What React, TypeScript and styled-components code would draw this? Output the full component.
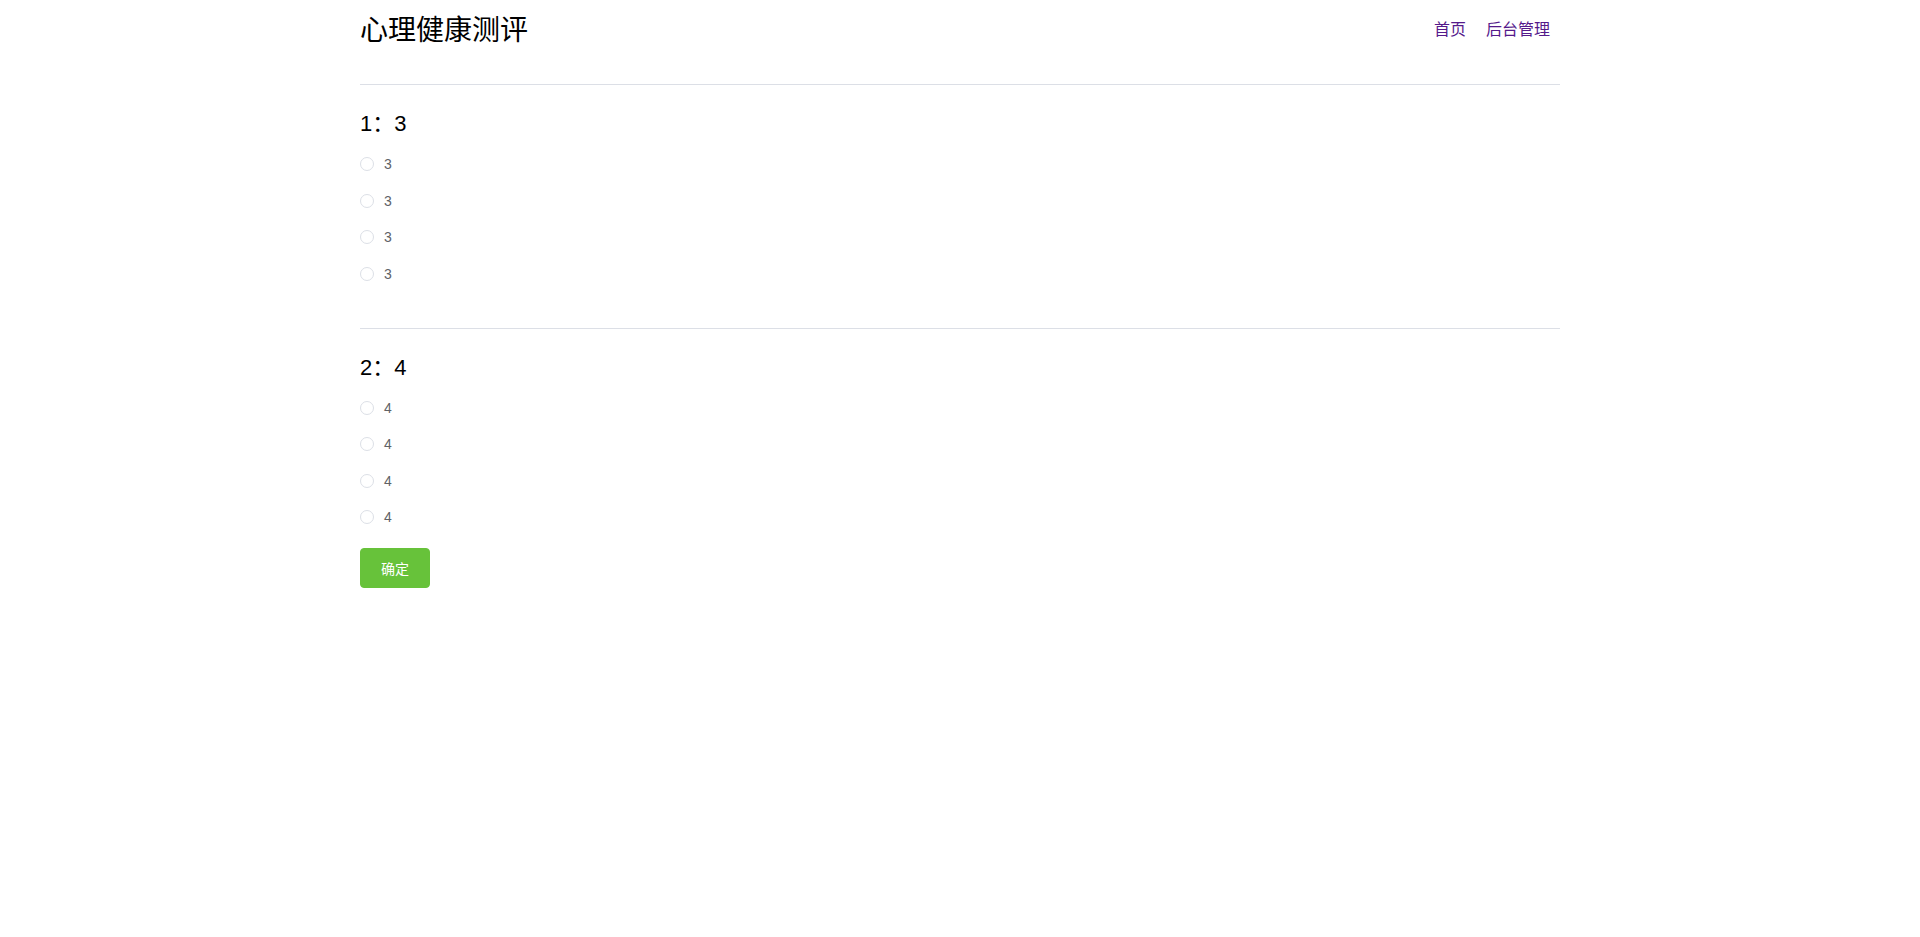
import React, { useState } from 'react';
import styled, { createGlobalStyle } from 'styled-components';

const GlobalStyle = createGlobalStyle`
	body {
		margin: 0;
		background: #fff;
		font-family: "Liberation Sans", "Noto Sans CJK SC", sans-serif;
	}
`;

const Page = styled.div`
	width: 1200px;
	margin: 0 auto;
`;

const Header = styled.header`
	display: flex;
	align-items: center;
	justify-content: space-between;
	height: 56px;
	margin-bottom: 28px;
`;

const Title = styled.div`
	font-size: 28px;
	color: #000;
`;

const Nav = styled.nav`
	display: flex;
`;

const NavLink = styled.a`
	font-size: 16px;
	color: #551a8b;
	text-decoration: none;
	padding: 0 10px;
	cursor: pointer;
`;

const Section = styled.section`
	border-top: 1px solid #dcdfe6;
	padding-top: 24px;
	& + & {
		margin-top: 35.5px;
	}
`;

const Question = styled.div`
	font-size: 22px;
	line-height: 30px;
	color: #000;
	margin-bottom: 7px;
`;

const Option = styled.label`
	display: flex;
	align-items: center;
	height: 36.5px;
	cursor: pointer;
`;

const Circle = styled.span<{ checked: boolean }>`
	box-sizing: border-box;
	width: 14px;
	height: 14px;
	border-radius: 50%;
	border: 1px solid ${(p) => (p.checked ? '#409eff' : '#dcdfe6')};
	background: ${(p) => (p.checked ? '#409eff' : '#fff')};
	display: flex;
	align-items: center;
	justify-content: center;
	&::after {
		content: '';
		width: 4px;
		height: 4px;
		border-radius: 50%;
		background: #fff;
		display: ${(p) => (p.checked ? 'block' : 'none')};
	}
`;

const OptionText = styled.span<{ checked: boolean }>`
	font-size: 14px;
	padding-left: 10px;
	color: ${(p) => (p.checked ? '#409eff' : '#606266')};
`;

const SubmitButton = styled.button`
	margin-top: 12px;
	box-sizing: border-box;
	height: 40px;
	padding: 0 20px;
	font-size: 14px;
	font-family: inherit;
	color: #fff;
	background: #67c23a;
	border: 1px solid #67c23a;
	border-radius: 4px;
	cursor: pointer;
`;

const questions = [
	{ id: 1, title: '3', options: ['3', '3', '3', '3'] },
	{ id: 2, title: '4', options: ['4', '4', '4', '4'] },
];

export default function App() {
	const [answers, setAnswers] = useState<Record<number, number>>({});

	return (
		<Page>
			<GlobalStyle />
			<Header>
				<Title>心理健康测评</Title>
				<Nav>
					<NavLink>首页</NavLink>
					<NavLink>后台管理</NavLink>
				</Nav>
			</Header>
			{questions.map((q) => (
				<Section key={q.id}>
					<Question>{q.id}：{q.title}</Question>
					{q.options.map((opt, i) => {
						const checked = answers[q.id] === i;
						return (
							<Option key={i} onClick={() => setAnswers({ ...answers, [q.id]: i })}>
								<Circle checked={checked} />
								<OptionText checked={checked}>{opt}</OptionText>
							</Option>
						);
					})}
				</Section>
			))}
			<SubmitButton>确定</SubmitButton>
		</Page>
	);
}
